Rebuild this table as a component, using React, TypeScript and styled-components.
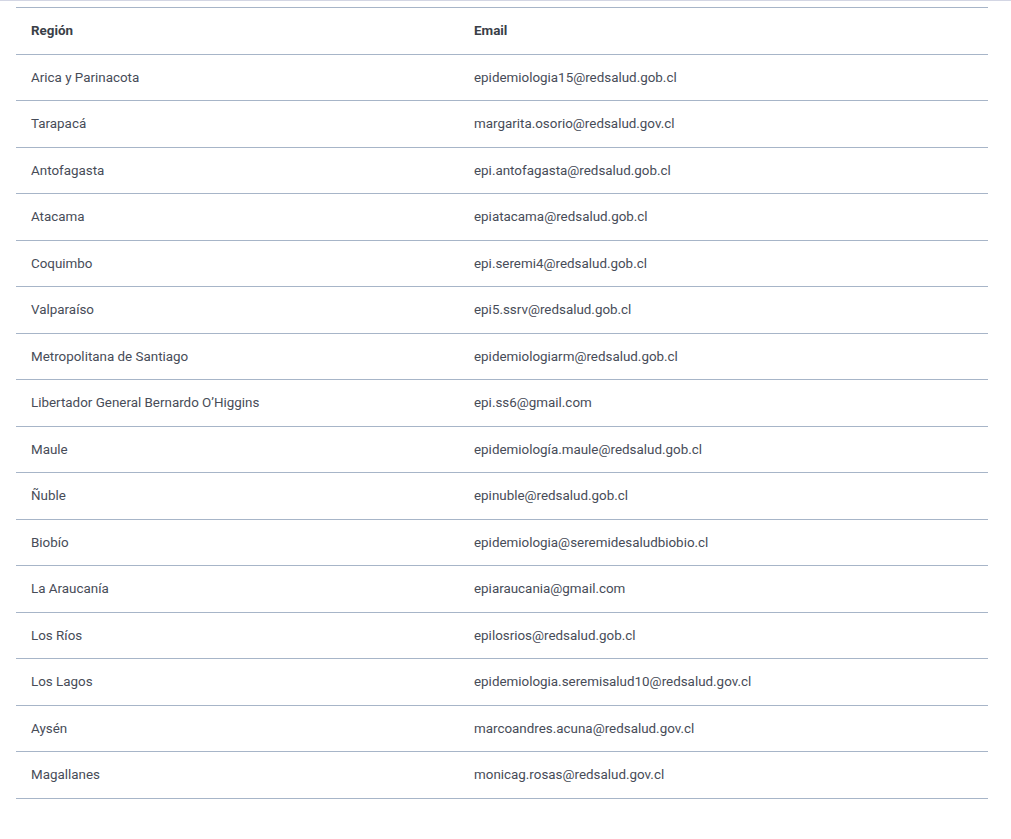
import React from "react";
import styled, { createGlobalStyle } from "styled-components";

const GlobalStyle = createGlobalStyle`
  html, body {
    margin: 0;
    padding: 0;
    background: #ffffff;
  }
  body {
    font-family: Roboto, "Liberation Sans", Arial, sans-serif;
  }
`;

const Page = styled.div`
  border-top: 1px solid #d3d6e4;
  padding: 6px 23px 24px 16px;
`;

const Table = styled.table`
  width: 100%;
  border-collapse: collapse;
  border-top: 1px solid #a7b5c8;
  font-size: 13.4px;
  color: #474c58;
`;

const HeadCell = styled.th<{ $width?: string }>`
  text-align: left;
  font-weight: 700;
  color: #3a3f48;
  padding: 12.25px 15px;
  line-height: 21px;
  border-bottom: 1px solid #a7b5c8;
  width: ${(p) => p.$width ?? "auto"};
`;

const Cell = styled.td`
  padding: 12.25px 15px;
  line-height: 21px;
  border-bottom: 1px solid #a7b5c8;
  white-space: nowrap;
`;

const rows: [string, string][] = [
  ["Arica y Parinacota", "epidemiologia15@redsalud.gob.cl"],
  ["Tarapacá", "margarita.osorio@redsalud.gov.cl"],
  ["Antofagasta", "epi.antofagasta@redsalud.gob.cl"],
  ["Atacama", "epiatacama@redsalud.gob.cl"],
  ["Coquimbo", "epi.seremi4@redsalud.gob.cl"],
  ["Valparaíso", "epi5.ssrv@redsalud.gob.cl"],
  ["Metropolitana de Santiago", "epidemiologiarm@redsalud.gob.cl"],
  ["Libertador General Bernardo O’Higgins", "epi.ss6@gmail.com"],
  ["Maule", "epidemiología.maule@redsalud.gob.cl"],
  ["Ñuble", "epinuble@redsalud.gob.cl"],
  ["Biobío", "epidemiologia@seremidesaludbiobio.cl"],
  ["La Araucanía", "epiaraucania@gmail.com"],
  ["Los Ríos", "epilosrios@redsalud.gob.cl"],
  ["Los Lagos", "epidemiologia.seremisalud10@redsalud.gov.cl"],
  ["Aysén", "marcoandres.acuna@redsalud.gov.cl"],
  ["Magallanes", "monicag.rosas@redsalud.gov.cl"],
];

export default function App() {
  return (
    <>
      <GlobalStyle />
      <Page>
        <Table>
          <thead>
            <tr>
              <HeadCell $width="413px">Región</HeadCell>
              <HeadCell>Email</HeadCell>
            </tr>
          </thead>
          <tbody>
            {rows.map(([region, email]) => (
              <tr key={region}>
                <Cell>{region}</Cell>
                <Cell>{email}</Cell>
              </tr>
            ))}
          </tbody>
        </Table>
      </Page>
    </>
  );
}
